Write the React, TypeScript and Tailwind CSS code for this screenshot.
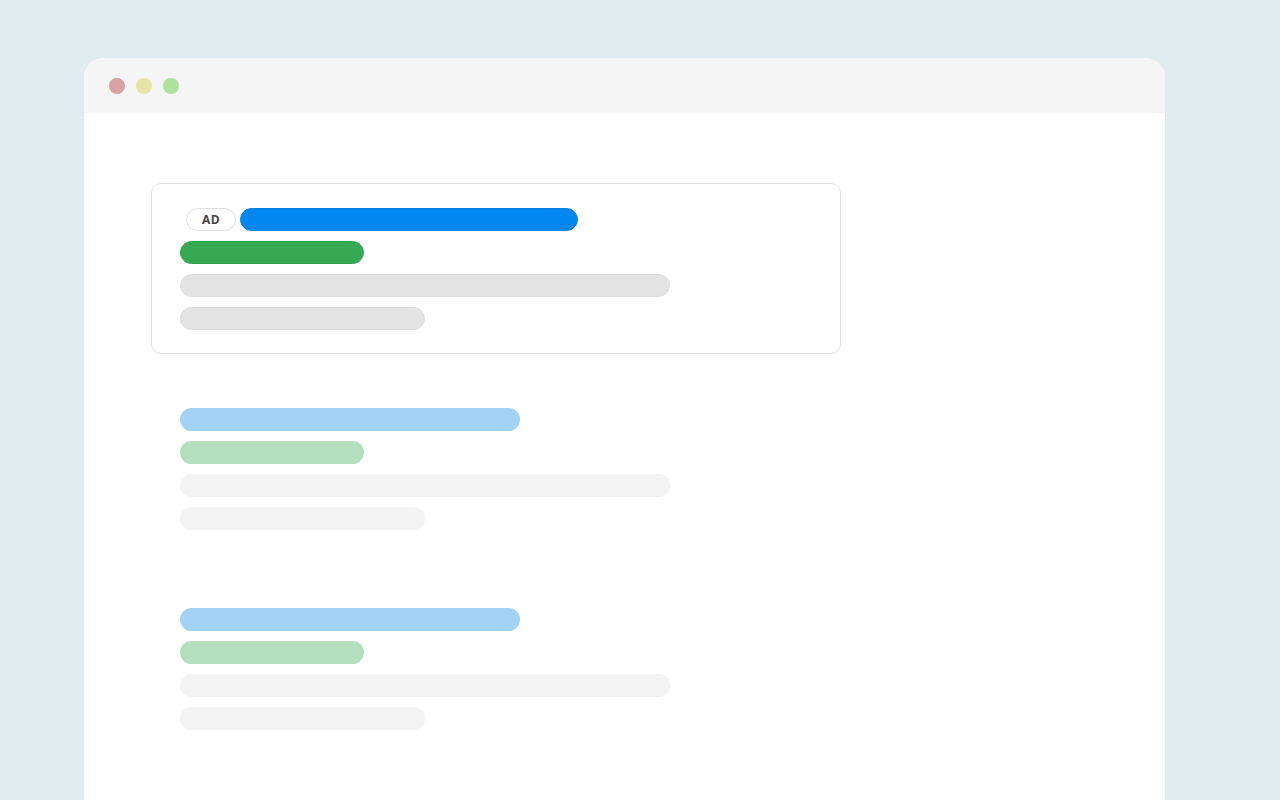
const results = [
  { sponsored: true },
  { sponsored: false },
  { sponsored: false },
];

function Bar({ className }: { className: string }) {
  return <div className={`h-[23px] rounded-full ${className}`} />;
}

function Result({ sponsored }: { sponsored: boolean }) {
  return (
    <div
      className={`w-[690px] rounded-[10px] border px-[28px] pt-[24px] pb-[23px] flex flex-col gap-[10px] ${
        sponsored ? 'border-[#e0e0e0]' : 'border-transparent'
      }`}
    >
      {sponsored ? (
        <div className="flex items-center gap-[4px] pl-[6px]">
          <span className="h-[23px] w-[50px] rounded-full border border-[#dedede] flex items-center justify-center text-[12px] font-bold text-[#444] tracking-[0.5px] leading-none">
            AD
          </span>
          <Bar className="w-[338px] bg-[#0287f0] border border-[#0a80e0]" />
        </div>
      ) : (
        <Bar className="w-[340px] bg-[#a2d3f7]" />
      )}
      <Bar className={`w-[184px] ${sponsored ? 'bg-[#37a953] border border-[#30a04c]' : 'bg-[#b3dfbf]'}`} />
      <Bar className={`w-[490px] ${sponsored ? 'bg-[#e3e3e3] border border-[#dcdcdc]' : 'bg-[#f3f3f3]'}`} />
      <Bar className={`w-[245px] ${sponsored ? 'bg-[#e3e3e3] border border-[#dcdcdc]' : 'bg-[#f3f3f3]'}`} />
    </div>
  );
}

export default function App() {
  return (
    <div
      className="w-[1280px] h-[800px] overflow-hidden bg-[#e1ecee] pt-[58px] pl-[84px]"
      style={{ fontFamily: '"Open Sans", "Liberation Sans", sans-serif' }}
    >
      <div className="w-[1081px] h-[800px] bg-white rounded-t-[20px] overflow-hidden">
        {/* Title bar */}
        <div className="h-[55px] bg-[#f5f5f5] flex items-center gap-[11px] pl-[25px]">
          <span className="w-4 h-4 rounded-full bg-[#d9a1a1]" />
          <span className="w-4 h-4 rounded-full bg-[#e6e3a4]" />
          <span className="w-4 h-4 rounded-full bg-[#aee0a0]" />
        </div>

        {/* Results */}
        <div className="pt-[70px] pl-[67px] flex flex-col gap-[29px]">
          {results.map((r, i) => (
            <Result key={i} sponsored={r.sponsored} />
          ))}
        </div>
      </div>
    </div>
  );
}
